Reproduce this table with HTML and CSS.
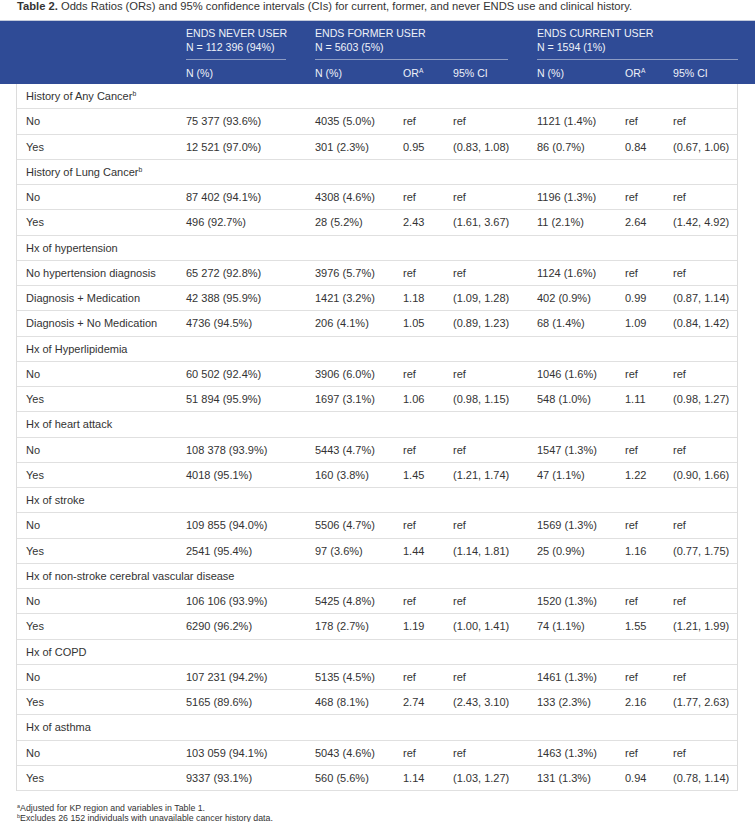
FILE: index.html
```html
<!DOCTYPE html>
<html>
<head>
<meta charset="utf-8">
<link rel="stylesheet" href="styles.css">
</head>
<body>
<div class="page">
  <p class="caption"><b>Table 2.</b> Odds Ratios (ORs) and 95% confidence intervals (CIs) for current, former, and never ENDS use and clinical history.</p>

  <div class="thead">
    <div class="hgrid">
      <div class="hcell blank"></div>
      <div class="hcell group g-never"><div class="gtitle">ENDS NEVER USER<br>N = 112 396 (94%)</div></div>
      <div class="hcell group g-former"><div class="gtitle">ENDS FORMER USER<br>N = 5603 (5%)</div></div>
      <div class="hcell group g-current"><div class="gtitle">ENDS CURRENT USER<br>N = 1594 (1%)</div></div>
      <div class="hcell blank"></div>
      <div class="hcell sub">N (%)</div>
      <div class="hcell sub">N (%)</div>
      <div class="hcell sub">OR<sup>A</sup></div>
      <div class="hcell sub">95% CI</div>
      <div class="hcell sub">N (%)</div>
      <div class="hcell sub">OR<sup>A</sup></div>
      <div class="hcell sub">95% CI</div>
    </div>
  </div>

  <div class="tbody">
    <div class="row section"><span>History of Any Cancer<sup>b</sup></span></div>
    <div class="row"><span>No</span><span>75 377 (93.6%)</span><span>4035 (5.0%)</span><span>ref</span><span>ref</span><span>1121 (1.4%)</span><span>ref</span><span>ref</span></div>
    <div class="row"><span>Yes</span><span>12 521 (97.0%)</span><span>301 (2.3%)</span><span>0.95</span><span>(0.83, 1.08)</span><span>86 (0.7%)</span><span>0.84</span><span>(0.67, 1.06)</span></div>
    <div class="row section"><span>History of Lung Cancer<sup>b</sup></span></div>
    <div class="row"><span>No</span><span>87 402 (94.1%)</span><span>4308 (4.6%)</span><span>ref</span><span>ref</span><span>1196 (1.3%)</span><span>ref</span><span>ref</span></div>
    <div class="row"><span>Yes</span><span>496 (92.7%)</span><span>28 (5.2%)</span><span>2.43</span><span>(1.61, 3.67)</span><span>11 (2.1%)</span><span>2.64</span><span>(1.42, 4.92)</span></div>
    <div class="row section"><span>Hx of hypertension</span></div>
    <div class="row"><span>No hypertension diagnosis</span><span>65 272 (92.8%)</span><span>3976 (5.7%)</span><span>ref</span><span>ref</span><span>1124 (1.6%)</span><span>ref</span><span>ref</span></div>
    <div class="row"><span>Diagnosis + Medication</span><span>42 388 (95.9%)</span><span>1421 (3.2%)</span><span>1.18</span><span>(1.09, 1.28)</span><span>402 (0.9%)</span><span>0.99</span><span>(0.87, 1.14)</span></div>
    <div class="row"><span>Diagnosis + No Medication</span><span>4736 (94.5%)</span><span>206 (4.1%)</span><span>1.05</span><span>(0.89, 1.23)</span><span>68 (1.4%)</span><span>1.09</span><span>(0.84, 1.42)</span></div>
    <div class="row section"><span>Hx of Hyperlipidemia</span></div>
    <div class="row"><span>No</span><span>60 502 (92.4%)</span><span>3906 (6.0%)</span><span>ref</span><span>ref</span><span>1046 (1.6%)</span><span>ref</span><span>ref</span></div>
    <div class="row"><span>Yes</span><span>51 894 (95.9%)</span><span>1697 (3.1%)</span><span>1.06</span><span>(0.98, 1.15)</span><span>548 (1.0%)</span><span>1.11</span><span>(0.98, 1.27)</span></div>
    <div class="row section"><span>Hx of heart attack</span></div>
    <div class="row"><span>No</span><span>108 378 (93.9%)</span><span>5443 (4.7%)</span><span>ref</span><span>ref</span><span>1547 (1.3%)</span><span>ref</span><span>ref</span></div>
    <div class="row"><span>Yes</span><span>4018 (95.1%)</span><span>160 (3.8%)</span><span>1.45</span><span>(1.21, 1.74)</span><span>47 (1.1%)</span><span>1.22</span><span>(0.90, 1.66)</span></div>
    <div class="row section"><span>Hx of stroke</span></div>
    <div class="row"><span>No</span><span>109 855 (94.0%)</span><span>5506 (4.7%)</span><span>ref</span><span>ref</span><span>1569 (1.3%)</span><span>ref</span><span>ref</span></div>
    <div class="row"><span>Yes</span><span>2541 (95.4%)</span><span>97 (3.6%)</span><span>1.44</span><span>(1.14, 1.81)</span><span>25 (0.9%)</span><span>1.16</span><span>(0.77, 1.75)</span></div>
    <div class="row section"><span>Hx of non-stroke cerebral vascular disease</span></div>
    <div class="row"><span>No</span><span>106 106 (93.9%)</span><span>5425 (4.8%)</span><span>ref</span><span>ref</span><span>1520 (1.3%)</span><span>ref</span><span>ref</span></div>
    <div class="row"><span>Yes</span><span>6290 (96.2%)</span><span>178 (2.7%)</span><span>1.19</span><span>(1.00, 1.41)</span><span>74 (1.1%)</span><span>1.55</span><span>(1.21, 1.99)</span></div>
    <div class="row section"><span>Hx of COPD</span></div>
    <div class="row"><span>No</span><span>107 231 (94.2%)</span><span>5135 (4.5%)</span><span>ref</span><span>ref</span><span>1461 (1.3%)</span><span>ref</span><span>ref</span></div>
    <div class="row"><span>Yes</span><span>5165 (89.6%)</span><span>468 (8.1%)</span><span>2.74</span><span>(2.43, 3.10)</span><span>133 (2.3%)</span><span>2.16</span><span>(1.77, 2.63)</span></div>
    <div class="row section"><span>Hx of asthma</span></div>
    <div class="row"><span>No</span><span>103 059 (94.1%)</span><span>5043 (4.6%)</span><span>ref</span><span>ref</span><span>1463 (1.3%)</span><span>ref</span><span>ref</span></div>
    <div class="row"><span>Yes</span><span>9337 (93.1%)</span><span>560 (5.6%)</span><span>1.14</span><span>(1.03, 1.27)</span><span>131 (1.3%)</span><span>0.94</span><span>(0.78, 1.14)</span></div>
  </div>

  <div class="notes">
    <p><sup>a</sup>Adjusted for KP region and variables in Table 1.</p>
    <p><sup>b</sup>Excludes 26 152 individuals with unavailable cancer history data.</p>
  </div>
</div>
</body>
</html>
```

FILE: styles.css
```css
html, body {
  margin: 0;
  padding: 0;
  background: #ffffff;
}

.page {
  width: 755px;
  font-family: "Liberation Sans", Arial, sans-serif;
  font-size: 11px;
  color: #333333;
}

.caption {
  margin: 0;
  padding: 0 0 0 17px;
  height: 20px;
  font-size: 11.2px;
  line-height: 12px;
  white-space: nowrap;
}

.caption b {
  font-weight: bold;
}

.thead {
  background: #2f4b96;
  border-top: 1px solid #c3cadb;
  height: 64px;
  box-sizing: border-box;
  padding: 5px 17px 0 16px;
  color: #eef1f8;
  font-size: 10.6px;
  white-space: nowrap;
}

.hgrid {
  display: grid;
  grid-template-columns: 160px 129px 88px 50px 84px 88px 48px 75px;
  grid-template-rows: 34px 18px;
}

.hcell {
  line-height: 14px;
}

.g-never { grid-column: 2 / 3; }
.g-former { grid-column: 3 / 6; }
.g-current { grid-column: 6 / 9; }

.gtitle {
  margin-left: 10px;
  margin-right: 19px;
  padding-bottom: 5px;
  border-bottom: 1px solid #8d9cc4;
}

.g-current .gtitle {
  margin-right: 0;
}

.sub {
  padding-left: 10px;
  padding-top: 6px;
}

sup {
  font-size: 0.62em;
  line-height: 0;
  vertical-align: 0.55em;
}

.tbody {
  margin-left: 16px;
  width: 722px;
  box-sizing: border-box;
  border-left: 1px solid #dcdcdc;
  border-right: 1px solid #dcdcdc;
}

.row {
  display: grid;
  grid-template-columns: 159px 129px 88px 50px 84px 88px 48px 74px;
  height: 25.25px;
  box-sizing: border-box;
  border-bottom: 1px solid #e0e0e0;
  align-items: center;
  white-space: nowrap;
}

.row > span {
  padding-left: 9px;
  line-height: 14px;
}

.row > span + span {
  padding-left: 10px;
}

.row.section > span {
  grid-column: 1 / 9;
}

.notes {
  padding: 12px 0 0 17px;
  font-size: 8.8px;
  line-height: 10px;
}

.notes p {
  margin: 0;
}
```
